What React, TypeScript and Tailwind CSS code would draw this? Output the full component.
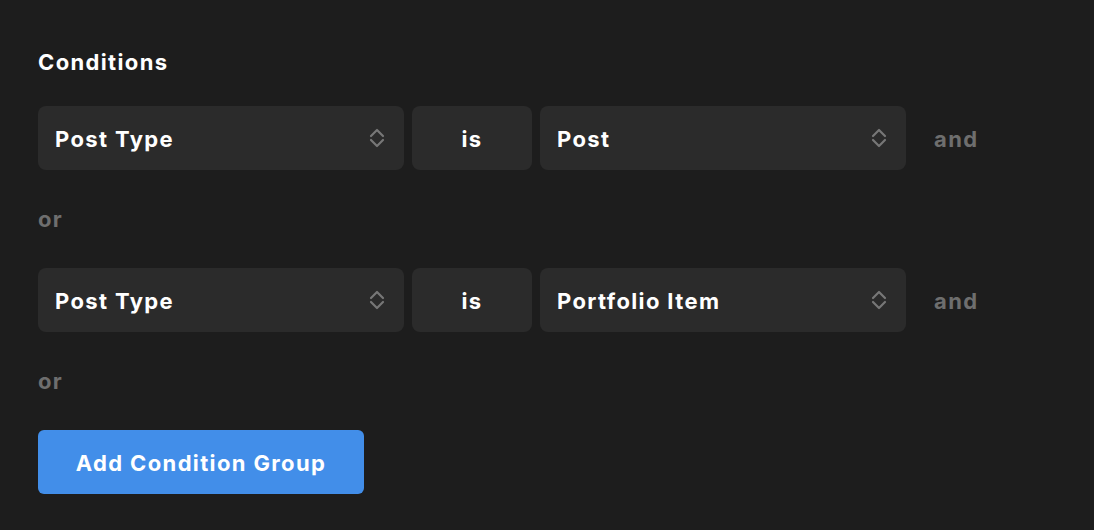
function Chevrons() {
  return (
    <svg width="18" height="22" viewBox="0 0 18 22" fill="none" className="text-[#777777]">
      <path d="M3 9 L9 3 L15 9" stroke="currentColor" strokeWidth="2.2" strokeLinecap="round" strokeLinejoin="round" />
      <path d="M3 13 L9 19 L15 13" stroke="currentColor" strokeWidth="2.2" strokeLinecap="round" strokeLinejoin="round" />
    </svg>
  );
}

function Select({ value }: { value: string }) {
  return (
    <div className="flex h-16 w-[366px] items-center justify-between rounded-lg bg-[#2b2b2b] pl-[17px] pr-[18px]">
      <span className="pt-[2px]">{value}</span>
      <Chevrons />
    </div>
  );
}

function Row({ value }: { value: string }) {
  return (
    <div className="flex items-center gap-2">
      <Select value="Post Type" />
      <div className="flex h-16 w-[120px] items-center justify-center rounded-lg bg-[#2b2b2b] pt-[2px]">
        is
      </div>
      <Select value={value} />
      <span className="ml-5 pt-[2px] text-[#6e6e6e]">and</span>
    </div>
  );
}

export default function App() {
  return (
    <div
      className="min-h-[530px] bg-[#1d1d1d] pl-[38px] pt-[48px] text-[22px] font-bold tracking-[0.062em] text-white"
      style={{ fontFamily: "Inter, 'Noto Sans', sans-serif" }}
    >
      <h2 className="mb-[30px] h-7 leading-7">Conditions</h2>

      <Row value="Post" />

      <div className="flex h-[98px] items-center text-[#6e6e6e]">or</div>

      <Row value="Portfolio Item" />

      <div className="flex h-[98px] items-center text-[#6e6e6e]">or</div>

      <button className="h-16 w-[326px] rounded-md bg-[#428ee9] pt-[2px] tracking-[0.062em] text-white">
        Add Condition Group
      </button>
    </div>
  );
}
